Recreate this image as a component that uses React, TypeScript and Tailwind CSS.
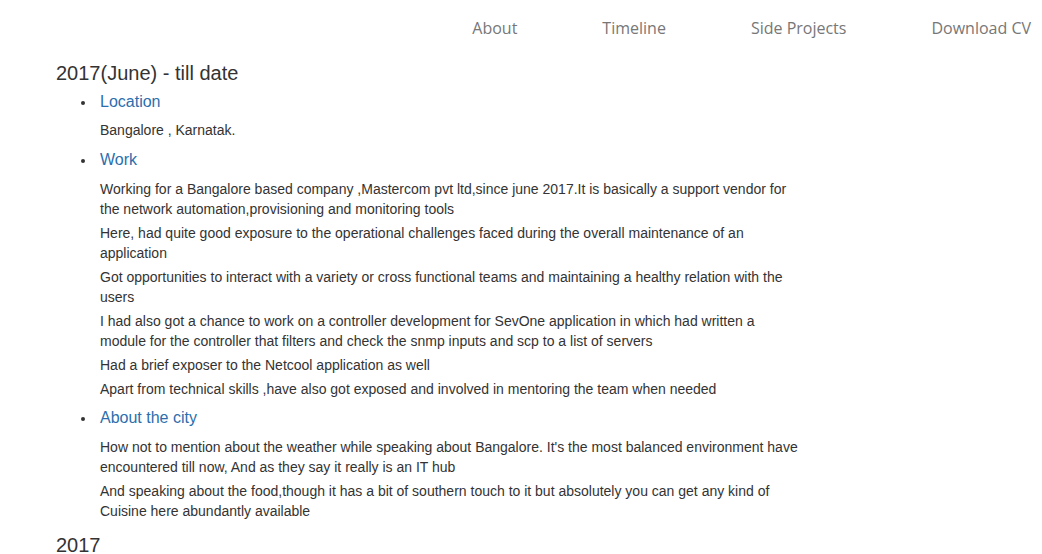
const NAV = ["About", "Timeline", "Side Projects", "Download CV"];

const SECTIONS: { title: string; gap: string; paras: string[] }[] = [
  { title: "Location", gap: "", paras: ["Bangalore , Karnatak."] },
  {
    title: "Work",
    gap: "mt-[9px]",
    paras: [
      "Working for a Bangalore based company ,Mastercom pvt ltd,since june 2017.It is basically a support vendor for the network automation,provisioning and monitoring tools",
      "Here, had quite good exposure to the operational challenges faced during the overall maintenance of an application",
      "Got opportunities to interact with a variety or cross functional teams and maintaining a healthy relation with the users",
      "I had also got a chance to work on a controller development for SevOne application in which had written a module for the controller that filters and check the snmp inputs and scp to a list of servers",
      "Had a brief exposer to the Netcool application as well",
      "Apart from technical skills ,have also got exposed and involved in mentoring the team when needed",
    ],
  },
  {
    title: "About the city",
    gap: "mt-[8px]",
    paras: [
      "How not to mention about the weather while speaking about Bangalore. It's the most balanced environment have encountered till now, And as they say it really is an IT hub",
      "And speaking about the food,though it has a bit of southern touch to it but absolutely you can get any kind of Cuisine here abundantly available",
    ],
  },
];

export default function App() {
  return (
    <div className="w-[1042px] h-[554px] overflow-hidden bg-white text-[#333] font-['Liberation_Sans',Arial,sans-serif]">
      {/* Nav */}
      <nav className="h-[56px] flex items-center justify-end gap-[85px] pr-[11px] font-['Open_Sans',sans-serif] text-[16px] text-[#777]">
        {NAV.map(n => (
          <a key={n} className="leading-[22px]">{n}</a>
        ))}
      </nav>

      <main className="pl-[56px]">
        <h3 className="mt-[4px] text-[20px] leading-[26px] text-[#333]">2017(June) - till date</h3>
        <ul className="mt-[5px]">
          {SECTIONS.map((s, i) => (
            <li key={s.title} className={s.gap}>
              <div className="flex items-center h-[22px]">
                <span className="w-[44px] flex">
                  <span className="ml-[25px] mt-[2px] w-[4px] h-[4px] rounded-full bg-[#333]" />
                </span>
                <a className="text-[16px] leading-[22px] text-[#2c6ead]">{s.title}</a>
              </div>
              <div className={`${i === 0 ? "mt-[7px]" : "mt-[8px]"} ml-[44px] w-[700px] flex flex-col gap-[4px] text-[14px] leading-[20px]`}>
                {s.paras.map(p => (
                  <p key={p}>{p}</p>
                ))}
              </div>
            </li>
          ))}
        </ul>
        <h3 className="mt-[11px] text-[20px] leading-[26px] text-[#333]">2017</h3>
      </main>
    </div>
  );
}
